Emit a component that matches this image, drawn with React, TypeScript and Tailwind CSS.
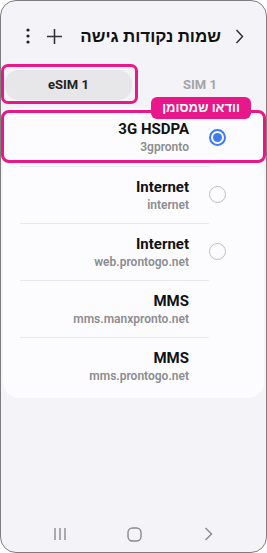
import React from "react";

type Apn = { name: string; sub: string; radio?: boolean; selected?: boolean };

const apns: Apn[] = [
  { name: "3G HSDPA", sub: "3gpronto", radio: true, selected: true },
  { name: "Internet", sub: "internet", radio: true },
  { name: "Internet", sub: "web.prontogo.net", radio: true },
  { name: "MMS", sub: "mms.manxpronto.net" },
  { name: "MMS", sub: "mms.prontogo.net" },
];

function Radio({ on }: { on?: boolean }) {
  if (on) {
    return (
      <div className="w-[17px] h-[17px] rounded-full border-2 border-[#3b7cf5] flex items-center justify-center">
        <div className="w-[9px] h-[9px] rounded-full bg-[#3b7cf5]" />
      </div>
    );
  }
  return <div className="w-[17px] h-[17px] rounded-full border-[1.5px] border-[#bdbdbd]" />;
}

export default function App() {
  return (
    <div
      className="relative w-[267px] h-[553px] rounded-[16px] border-[1.5px] border-[#7d7d7d] bg-[#f4f4f8] overflow-hidden flex flex-col"
      style={{ fontFamily: 'Roboto, "Liberation Sans", "DejaVu Sans", sans-serif' }}
    >
      {/* header */}
      <div className="mt-[22px] h-[26px] flex items-center pl-[22px] pr-[22px]">
        <svg width="10" height="18" viewBox="0 0 10 18" className="text-[#222]">
          <circle cx="5" cy="3" r="1.6" fill="currentColor" />
          <circle cx="5" cy="9" r="1.6" fill="currentColor" />
          <circle cx="5" cy="15" r="1.6" fill="currentColor" />
        </svg>
        <svg width="17" height="17" viewBox="0 0 17 17" className="ml-[13px] text-[#333]">
          <path d="M8.5 1v15M1 8.5h15" stroke="currentColor" strokeWidth="1.6" fill="none" />
        </svg>
        <div className="flex-1" />
        <div dir="rtl" className="text-[17px] font-bold text-[#111] leading-none">
          שמות נקודות גישה
        </div>
        <svg width="9" height="15" viewBox="0 0 9 15" className="ml-[14px] text-[#333]">
          <path d="M1.5 1l6 6.5-6 6.5" stroke="currentColor" strokeWidth="1.5" fill="none" />
        </svg>
      </div>

      {/* tabs */}
      <div className="mt-[21px] h-[30px] flex items-center">
        <div className="ml-[4px] w-[127px] h-[30px] rounded-[14px] bg-[#e7e7ea] flex items-center justify-center text-[13px] font-bold text-[#222]">
          eSIM 1
        </div>
        <div className="flex-1 flex items-center justify-center text-[13px] font-bold text-[#a3a3a8] pl-[2px]">
          SIM 1
        </div>
      </div>

      {/* list card */}
      <div className="mt-[8px] mx-[2px] rounded-[16px] bg-[#fcfcfe] pt-[1px] pb-[4px]">
        {apns.map((a, i) => (
          <div key={i} className="h-[57px] flex items-center pl-[17px] pr-[38px]">
            <div
              className={
                "flex-1 h-full flex flex-col items-end justify-center pr-[20px] " +
                (i > 0 ? "border-t border-[#e9e9ec]" : "")
              }
            >
              <div className="text-[15px] font-bold text-[#111] leading-[19px]">{a.name}</div>
              <div className="text-[12px] font-semibold text-[#8c8c90] leading-[16px]">{a.sub}</div>
            </div>
            <div className="w-[17px] flex justify-center">
              {a.radio && <Radio on={a.selected} />}
            </div>
          </div>
        ))}
      </div>

      <div className="flex-1" />

      {/* nav bar */}
      <div className="h-[36px] flex items-center pl-[52px]">
        <svg width="14" height="14" viewBox="0 0 14 14" className="text-[#8a8a8a]">
          <path d="M2 1v12M7 1v12M12 1v12" stroke="currentColor" strokeWidth="1.4" />
        </svg>
        <svg width="15" height="15" viewBox="0 0 15 15" className="ml-[60px] text-[#8a8a8a]">
          <rect x="1" y="1" width="13" height="13" rx="4.5" stroke="currentColor" strokeWidth="1.4" fill="none" />
        </svg>
        <svg width="9" height="14" viewBox="0 0 9 14" className="ml-[62px] text-[#8a8a8a]">
          <path d="M1.5 1l6 6-6 6" stroke="currentColor" strokeWidth="1.4" fill="none" />
        </svg>
      </div>

      {/* highlights */}
      <div className="absolute left-0 top-[63px] w-[137px] h-[40px] rounded-[7px] border-[3px] border-[#e8178a]" />
      <div className="absolute left-0 top-[109px] w-[265px] h-[53px] rounded-[8px] border-[3px] border-[#e8178a]" />
      <div
        dir="rtl"
        className="absolute left-[150px] top-[96px] w-[100px] h-[22px] rounded-[6px] bg-[#e8178a] text-white text-[13px] font-bold flex items-center justify-center"
      >
        וודאו שמסומן
      </div>
    </div>
  );
}
